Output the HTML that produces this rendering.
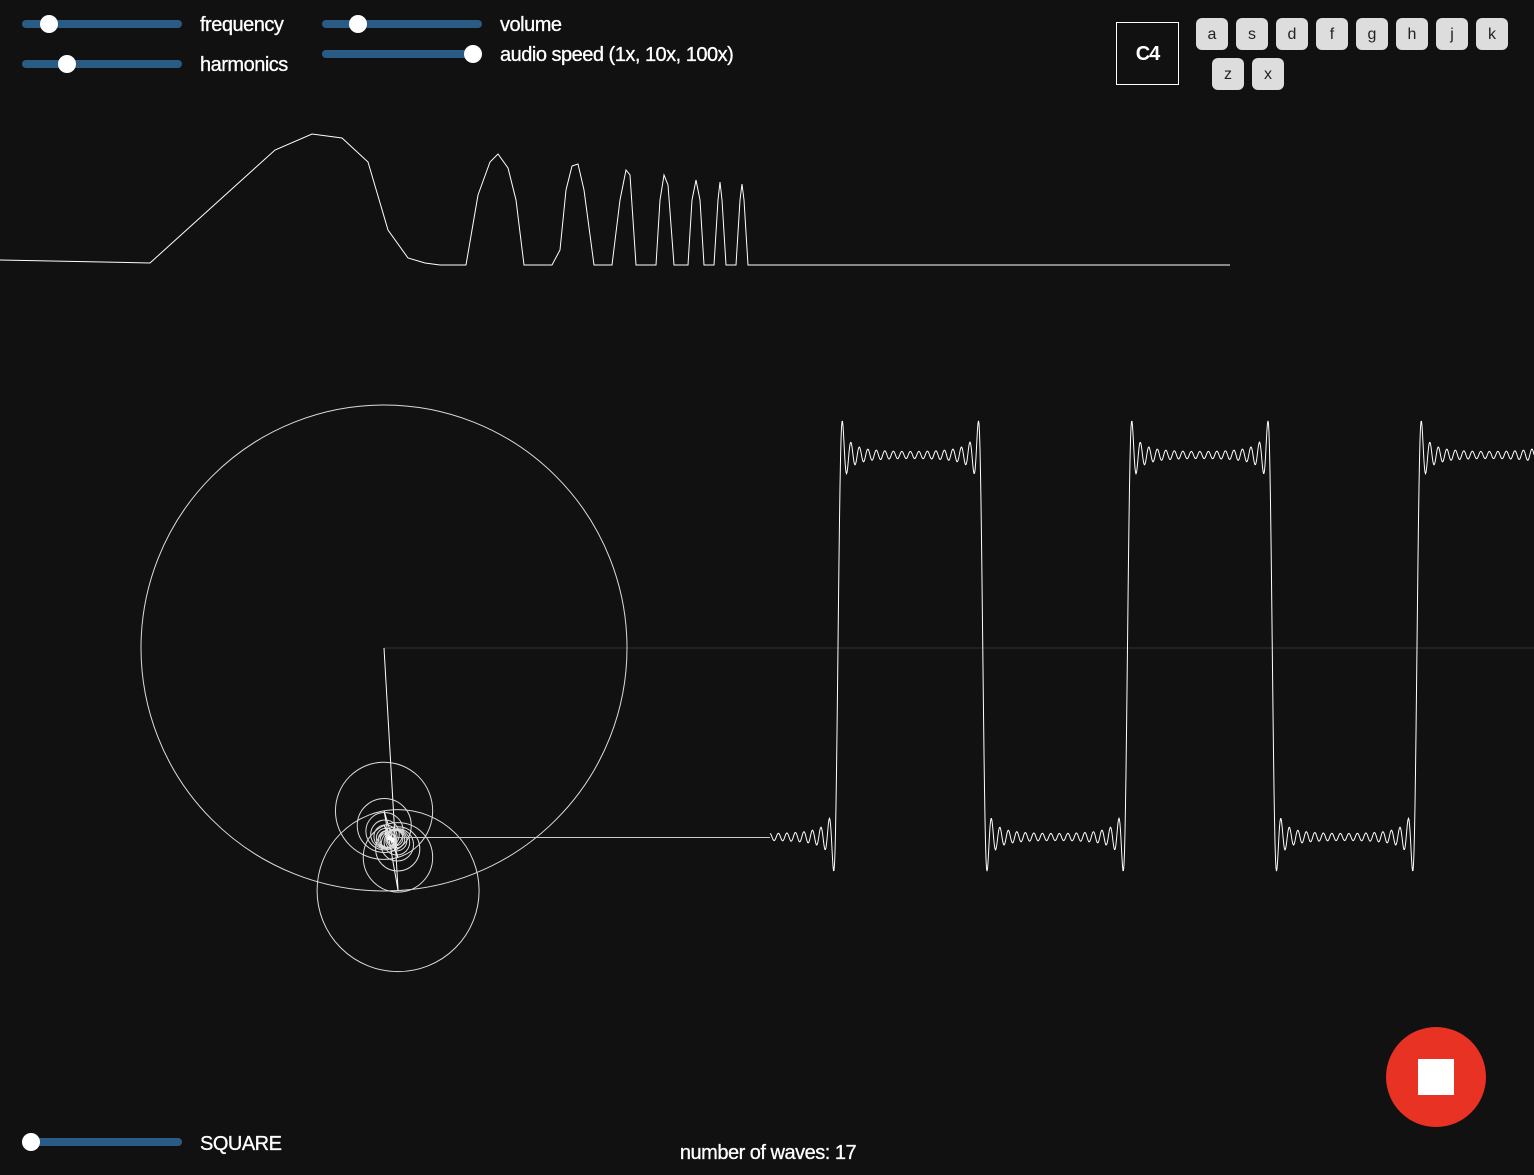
<!DOCTYPE html>
<html><head><meta charset="utf-8"><style>
html,body{margin:0;padding:0;background:#111;width:1534px;height:1175px;overflow:hidden;font-family:"Liberation Sans",sans-serif;color:#fff}
.tr{position:absolute;height:8px;width:160px;background:#2a5b85;border-radius:4px}
.th{position:absolute;width:18px;height:18px;border-radius:50%;background:#fff;top:-5px}
.lb{position:absolute;font-size:20px;letter-spacing:-0.5px;line-height:20px;-webkit-text-stroke:0.3px #fff}
.k{position:absolute;width:32px;height:32px;background:#ddd;border-radius:6px;color:#222;font-size:16px;text-align:center;line-height:33px}
</style></head><body>
<div class="tr" style="left:22px;top:20px"><div class="th" style="left:18px"></div></div>
<div class="lb" style="left:200px;top:15px">frequency</div>
<div class="tr" style="left:22px;top:60px"><div class="th" style="left:36px"></div></div>
<div class="lb" style="left:200px;top:55px">harmonics</div>
<div class="tr" style="left:322px;top:20px"><div class="th" style="left:27px"></div></div>
<div class="lb" style="left:500px;top:15px">volume</div>
<div class="tr" style="left:322px;top:50px"><div class="th" style="left:142px"></div></div>
<div class="lb" style="left:500px;top:45px">audio speed (1x, 10x, 100x)</div>
<div style="position:absolute;left:1116px;top:22px;width:61px;height:61px;border:1px solid #fff;font-weight:bold;font-size:20px;line-height:62px;text-align:center;letter-spacing:-1px">C4</div>
<div class="k" style="left:1196px;top:18px">a</div><div class="k" style="left:1236px;top:18px">s</div><div class="k" style="left:1276px;top:18px">d</div><div class="k" style="left:1316px;top:18px">f</div><div class="k" style="left:1356px;top:18px">g</div><div class="k" style="left:1396px;top:18px">h</div><div class="k" style="left:1436px;top:18px">j</div><div class="k" style="left:1476px;top:18px">k</div>
<div class="k" style="left:1212px;top:58px">z</div><div class="k" style="left:1252px;top:58px">x</div>
<svg id="s" width="1534" height="1175" style="position:absolute;left:0;top:0" fill="none" stroke="#fff" stroke-width="1">
<polyline points="0,260 150,263 275,150 312,134 342,138 368,162 388,230 408,258 425,263 440,265 466,265 478,195 490,162 498,154 508,168 516,200 524,265 552,265 560,250 566,190 572,166 578,164 584,190 594,265 612,265 620,200 626,170 630,175 636,265 656,265 660,200 664,175 668,185 674,265 688,265 692,200 696,180 700,200 704,265 714,265 718,200 720,182 722,200 726,265 736,265 740,200 742,184 744,200 748,265 1230,265"/>
<line x1="384" y1="648" x2="1534" y2="648" stroke="#333"/>
</svg>
<div class="tr" style="left:22px;top:1138px"><div class="th" style="left:0px"></div></div>
<div class="lb" style="left:200px;top:1134px">SQUARE</div>
<div class="lb" style="left:0;width:1536px;text-align:center;top:1143px">number of waves: 17</div>
<div style="position:absolute;left:1386px;top:1027px;width:100px;height:100px;border-radius:50%;background:#e83224"></div>
<div style="position:absolute;left:1418px;top:1059px;width:36px;height:36px;background:#fff"></div>
<script>
var s=document.getElementById('s'),NS='http://www.w3.org/2000/svg';
function el(t,a){var e=document.createElementNS(NS,t);for(var k in a)e.setAttribute(k,a[k]);s.appendChild(e);return e;}
var R=243,th=Math.PI/2-0.058,x=384,y=648;
for(var n=1;n<=33;n+=2){var r=R/n;el('circle',{cx:x,cy:y,r:r,stroke:'#ddd'});var nx=x+r*Math.cos(n*th),ny=y+r*Math.sin(n*th);el('line',{x1:x,y1:y,x2:nx,y2:ny});x=nx;y=ny;}
el('line',{x1:x,y1:y,x2:770,y2:y,stroke:'#ccc'});
var p=[];for(var X=770;X<=1534;X+=0.5){var ph=(X-838)/289.5*2*Math.PI,f=0;for(var m=1;m<=33;m+=2)f+=Math.sin(m*ph)/m;f*=4/Math.PI;p.push(X+','+(646-191*f).toFixed(1));}
el('polyline',{points:p.join(' ')});
</script>
</body></html>
